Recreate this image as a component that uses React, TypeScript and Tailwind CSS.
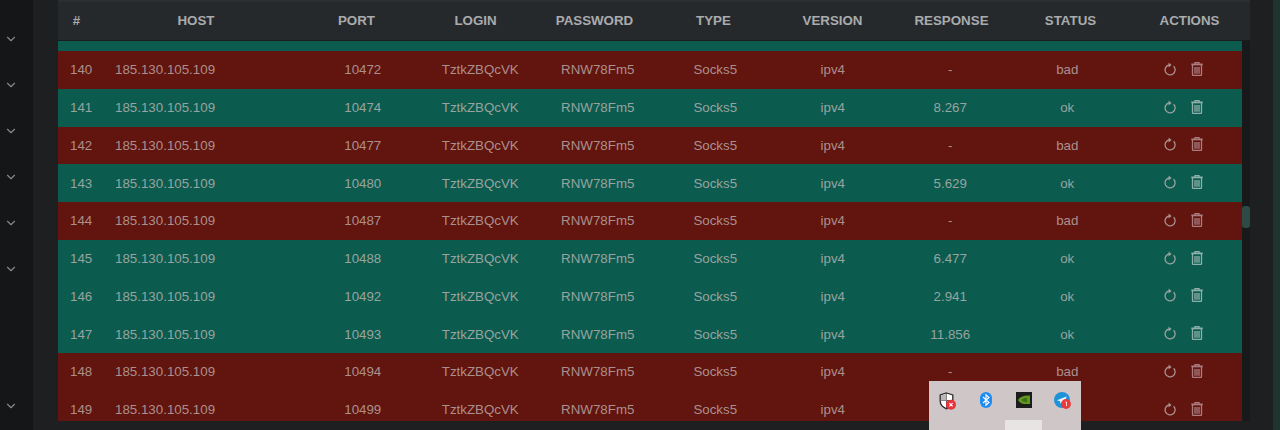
import React from 'react';
import { ChevronDown } from 'lucide-react';

type Row = { id: number; port: number; response: string; status: 'ok' | 'bad' };

const rows: Row[] = [
  { id: 140, port: 10472, response: '-', status: 'bad' },
  { id: 141, port: 10474, response: '8.267', status: 'ok' },
  { id: 142, port: 10477, response: '-', status: 'bad' },
  { id: 143, port: 10480, response: '5.629', status: 'ok' },
  { id: 144, port: 10487, response: '-', status: 'bad' },
  { id: 145, port: 10488, response: '6.477', status: 'ok' },
  { id: 146, port: 10492, response: '2.941', status: 'ok' },
  { id: 147, port: 10493, response: '11.856', status: 'ok' },
  { id: 148, port: 10494, response: '-', status: 'bad' },
  { id: 149, port: 10499, response: '-', status: 'bad' },
];

const headers = ['PORT', 'LOGIN', 'PASSWORD', 'TYPE', 'VERSION', 'RESPONSE', 'STATUS', 'ACTIONS'];

const RefreshIcon = () => (
  <svg width="13" height="14" viewBox="0 0 13 14" fill="none" stroke="currentColor" strokeWidth="1.300">
    <path d="M10.600 4.300A5 5 0 1 1 6 3" />
    <path d="M5.600 0.600l3 2.400-3 2.400z" fill="currentColor" stroke="none" />
  </svg>
);

const TrashIcon = () => (
  <svg width="12" height="14" viewBox="0 0 12 14" fill="none" stroke="currentColor" strokeWidth="1.300">
    <path d="M0.300 2.400h11.400" strokeWidth="1.800" />
    <path d="M4 2V0.700h4V2" />
    <path d="M1.500 3v9.400c0 .7.400 1.100 1.100 1.100h6.800c.7 0 1.100-.4 1.100-1.100V3" />
    <path d="M4 5v6.800M6 5v6.800M8 5v6.800" />
  </svg>
);

const TrayIcons = () => (
  <div className="absolute left-[929px] top-[381px] h-[49px] w-[152px] bg-[#cfc7c7]">
    <div className="flex items-start pl-[10px] pt-[11px]">
      {/* security shield */}
      <svg width="17" height="18" viewBox="0 0 17 18">
        <path d="M7.500 1l6.300 2v6c0 4-2.800 6.300-6.300 7.800C4 15.300 1.200 13 1.200 9V3z" fill="#fff" stroke="#2a2a2a" strokeWidth="1.300" />
        <path d="M7.500 1.500v15M1.500 8.500h12" stroke="#555" strokeWidth="1" />
        <path d="M7.500 2v6.500H2V3.500z" fill="#b9b6b6" />
        <circle cx="12" cy="12.800" r="5" fill="#e8323c" />
        <path d="M10.400 11.200l3.200 3.200M13.600 11.200l-3.200 3.200" stroke="#fff" strokeWidth="1.200" />
      </svg>
      {/* bluetooth */}
      <svg width="12" height="16" viewBox="0 0 12 16" className="ml-[24px]">
        <rect width="12" height="16" rx="6" fill="#1e8cf2" />
        <path d="M3 5l6 5.500-3 2.700V2.800L9 5.500 3 11" fill="none" stroke="#fff" strokeWidth="1.100" />
      </svg>
      {/* nvidia */}
      <svg width="16" height="16" viewBox="0 0 16 16" className="ml-[24px]">
        <rect width="16" height="16" fill="#1c1c1c" />
        <path d="M2 8c2-3.500 6-5 12-4.500V12H8.500C6 12 3.500 10.500 2 8z" fill="#5f9a1e" />
        <path d="M5.500 8c1.500-1.700 3.500-2.200 5.500-2v4.200C9 10.400 7 9.600 5.500 8z" fill="#3f6f16" />
      </svg>
      {/* telegram */}
      <svg width="17" height="17" viewBox="0 0 17 17" className="ml-[22px]">
        <circle cx="8" cy="8" r="8" fill="#1f92d8" />
        <path d="M3 8.200l9.500-3.700-2 8-2.800-2-1.300 1.300-.3-2.600z" fill="#e9f4fb" />
        <circle cx="12" cy="12" r="4.900" fill="#ea3b3b" />
        <path d="M11.400 10h1.100v4" fill="none" stroke="#ffd5d5" strokeWidth="1" />
      </svg>
    </div>
    <div className="absolute bottom-0 left-[76px] h-[10px] w-[37px] bg-[#e8e4e4]" />
  </div>
);

export default function App() {
  return (
    <div
      className="relative flex h-[430px] w-[1280px] overflow-hidden bg-[#1d1f21]"
      style={{ fontFamily: '"Liberation Sans", Arial, sans-serif' }}
    >
      {/* Sidebar */}
      <aside className="flex w-[33px] shrink-0 flex-col items-center bg-[#141618] pb-[17px] pr-[12px] pt-[32px] text-[#85888a]">
        <div className="flex flex-col gap-[32px]">
          {[0, 1, 2, 3, 4, 5].map((i) => (
            <ChevronDown key={i} className="h-[14px] w-[14px]" strokeWidth={2} />
          ))}
        </div>
        <ChevronDown className="mt-auto h-[14px] w-[14px]" strokeWidth={2} />
      </aside>

      {/* Table */}
      <main className="ml-[25px] flex h-[421px] w-[1192px] flex-col overflow-hidden">
        <div className="flex h-[41px] shrink-0 items-center border-b border-t-2 border-[#1a1c1e] border-t-[#2c2f32] bg-[#26292c] text-[13.33px] font-bold text-[#a9abac]">
          <div className="w-[37px] text-center">#</div>
          <div className="w-[202px] text-center">HOST</div>
          {headers.map((h) => (
            <div key={h} className="w-[119px] text-center">
              {h}
            </div>
          ))}
        </div>

        <div className="flex min-h-0 flex-1">
          <div className="w-[1184px] shrink-0">
            <div className="h-[10px] bg-[#0b5c4e]" />
            {rows.map((r) => (
              <div
                key={r.id}
                className={`flex h-[37.75px] items-center pt-px text-[13.33px] ${
                  r.status === 'ok' ? 'bg-[#0b5c4e] text-[#98a3a0]' : 'bg-[#62140e] text-[#aa908d]'
                }`}
              >
                <div className="w-[45px] pl-[12px]">{r.id}</div>
                <div className="w-[201px] pl-[12px]">185.130.105.109</div>
                <div className="w-[117.500px] text-center">{r.port}</div>
                <div className="w-[117.500px] text-center">TztkZBQcVK</div>
                <div className="w-[117.500px] text-center">RNW78Fm5</div>
                <div className="w-[117.500px] text-center">Socks5</div>
                <div className="w-[117.500px] text-center">ipv4</div>
                <div className="w-[117.500px] text-center">{r.response}</div>
                <div className="w-[116.500px] text-center">{r.status}</div>
                <div className="flex w-[114px] items-start justify-center gap-[15px] pb-[3px]">
                  <RefreshIcon />
                  <span className={r.status === 'ok' ? 'text-[#8fb0aa]' : 'text-[#ab7c80]'}>
                    <TrashIcon />
                  </span>
                </div>
              </div>
            ))}
          </div>
          {/* Scrollbar */}
          <div className="flex w-[8px] flex-col bg-[#17191a] pt-[165px]">
            <div className="h-[22px] rounded-[3px] bg-[#2f4a46]" />
          </div>
        </div>
      </main>

      {/* Right edge */}
      <div className="ml-[23px] w-[7px] bg-[#1f332f]" />

      <TrayIcons />
    </div>
  );
}
